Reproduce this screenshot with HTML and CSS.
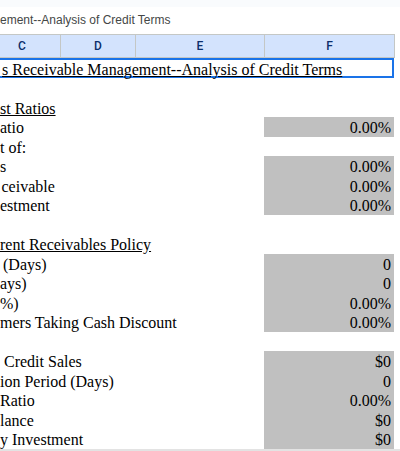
FILE: index.html
```html
<!DOCTYPE html>
<html>
<head>
<meta charset="utf-8">
<link rel="stylesheet" href="styles.css">
</head>
<body>
<div class="app">
  <div class="topstripe"></div>
  <div class="fbar"><span class="fbar-text">ement--Analysis of Credit Terms</span></div>
  <div class="colheads">
    <div class="ch ch-c">C</div>
    <div class="ch ch-d">D</div>
    <div class="ch ch-e">E</div>
    <div class="ch ch-f">F</div>
  </div>
  <div class="sheet">
    <div class="row title-row"><div class="title-cell"><span class="u">s Receivable Management--Analysis of Credit Terms</span></div></div>
    <div class="row"><div class="label"></div><div class="val"></div></div>
    <div class="row"><div class="label"><span class="u">st Ratios</span></div><div class="val"></div></div>
    <div class="row"><div class="label">atio</div><div class="val g">0.00%</div></div>
    <div class="row"><div class="label">t of:</div><div class="val"></div></div>
    <div class="row"><div class="label">s</div><div class="val g">0.00%</div></div>
    <div class="row"><div class="label"><span class="shift-r">ceivable</span></div><div class="val g">0.00%</div></div>
    <div class="row"><div class="label">estment</div><div class="val g">0.00%</div></div>
    <div class="row"><div class="label"></div><div class="val"></div></div>
    <div class="row"><div class="label"><span class="u">rent Receivables Policy</span></div><div class="val"></div></div>
    <div class="row"><div class="label"><span class="shift-d">(Days)</span></div><div class="val g">0</div></div>
    <div class="row"><div class="label">ays)</div><div class="val g">0</div></div>
    <div class="row"><div class="label">%)</div><div class="val g">0.00%</div></div>
    <div class="row"><div class="label">mers Taking Cash Discount</div><div class="val g">0.00%</div></div>
    <div class="row"><div class="label"></div><div class="val"></div></div>
    <div class="row"><div class="label"><span class="shift-c">Credit Sales</span></div><div class="val g">$0</div></div>
    <div class="row"><div class="label">ion Period (Days)</div><div class="val g">0</div></div>
    <div class="row"><div class="label">Ratio</div><div class="val g">0.00%</div></div>
    <div class="row"><div class="label">lance</div><div class="val g">$0</div></div>
    <div class="row"><div class="label">y Investment</div><div class="val g">$0</div></div>
  </div>
  <div class="bottombar"></div>
</div>
</body>
</html>
```
FILE: styles.css
```css
html, body {
  margin: 0;
  padding: 0;
  background: #ffffff;
}
.app {
  width: 400px;
  height: 451px;
  overflow: hidden;
  display: flex;
  flex-direction: column;
}
.topstripe {
  height: 7px;
  background: #f9fbfd;
  flex: none;
}
.fbar {
  height: 27px;
  flex: none;
  display: flex;
  align-items: center;
  font-family: "Liberation Sans", Arial, sans-serif;
  font-size: 12px;
  color: #444746;
  white-space: nowrap;
}
.fbar-text {
  margin-top: -1px;
}
.colheads {
  height: 24px;
  flex: none;
  display: flex;
  box-sizing: border-box;
  border-top: 1px solid #c4c7c5;
  width: 411px;
  margin-left: -16px;
}
.ch {
  flex: none;
  box-sizing: border-box;
  height: 23px;
  background: #d3e3fd;
  border-right: 1px solid #c4c7c5;
  border-bottom: 1px solid #c4c7c5;
  display: flex;
  align-items: center;
  justify-content: center;
  font-family: Roboto, "Liberation Sans", sans-serif;
  font-size: 12px;
  font-weight: 500;
  color: #0b2e6b;
}
.ch-c { width: 77px; }
.ch-d { width: 75px; }
.ch-e { width: 129px; }
.ch-f { width: 130px; }
.sheet {
  flex: none;
  font-family: "Liberation Serif", "Times New Roman", serif;
  font-size: 16px;
  color: #000000;
}
.row {
  display: flex;
  height: 19.5px;
  box-sizing: border-box;
}
.label {
  width: 264px;
  flex: none;
  white-space: nowrap;
  box-sizing: border-box;
  padding-top: 3px;
  line-height: 16.5px;
  overflow: visible;
}
.val {
  width: 130px;
  flex: none;
  box-sizing: border-box;
  text-align: right;
  padding-right: 3px;
  padding-top: 3px;
  line-height: 16.5px;
}
.val.g {
  background: #c0c0c0;
}
.u {
  text-decoration: underline;
}
.shift-c {
  margin-left: 4px;
}
.shift-d {
  margin-left: 3px;
}
.shift-r {
  margin-left: 1.5px;
}
.title-row {
  height: 20px;
}
.title-cell {
  width: 396px;
  flex: none;
  margin-left: -2px;
  box-sizing: border-box;
  border: 2px solid #1a73e8;
  padding-left: 2px;
  padding-top: 4px;
  line-height: 12px;
  white-space: nowrap;
}
.bottombar {
  margin-top: auto;
  height: 3px;
  background: #e3e3e3;
  flex: none;
}
```
